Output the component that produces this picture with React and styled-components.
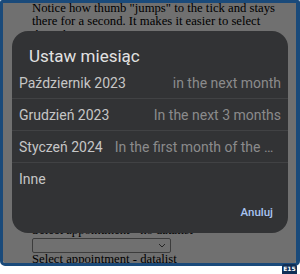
import React from "react";
import styled, { createGlobalStyle } from "styled-components";

const GlobalStyle = createGlobalStyle`
  html, body {
    margin: 0;
    padding: 0;
    background: #ffffff;
  }
`;

const options = [
  { id: 1, label: "Październik 2023", hint: "in the next month" },
  { id: 2, label: "Grudzień 2023", hint: "In the next 3 months" },
  { id: 3, label: "Styczeń 2024", hint: "In the first month of the next year" },
  { id: 4, label: "Inne", hint: "" },
];

function App() {
  return (
    <>
      <GlobalStyle />
      <Screen>
        <Frame>
          <Page>
            <Paragraph>
              Notice how thumb "jumps" to the tick and stays there for a second. It makes it
              easier to select the value you want.
            </Paragraph>
            <Spacer />
            <Label>Select appointment - no datalist</Label>
            <SelectBox>
              <svg width="8" height="5" viewBox="0 0 8 5">
                <path d="M1 1l3 3 3-3" fill="none" stroke="#555" strokeWidth="1" />
              </svg>
            </SelectBox>
            <Label>Select appointment - datalist</Label>
          </Page>

          <Scrim>
            <Dialog>
              <Title>Ustaw miesiąc</Title>
              <List>
                {options.map((opt) => (
                  <Row key={opt.id}>
                    <Primary>{opt.label}</Primary>
                    <Secondary>{opt.hint}</Secondary>
                  </Row>
                ))}
              </List>
              <Footer>
                <TextButton>Anuluj</TextButton>
              </Footer>
            </Dialog>
          </Scrim>
        </Frame>
        <Badge>E15</Badge>
      </Screen>
    </>
  );
}

const Screen = styled.div`
  position: relative;
  width: 300px;
  height: 274px;
  background: #ffffff;
`;

const Frame = styled.div`
  position: relative;
  box-sizing: border-box;
  width: 300px;
  height: 266px;
  border: 3px solid #1a4a7a;
  border-right-width: 4px;
  border-radius: 2px 2px 5px 5px;
  overflow: hidden;
`;

const Page = styled.div`
  height: 100%;
  background: #ffffff;
  padding: 0 0 0 29px;
  margin-top: -1px;
  font-family: "Liberation Serif", serif;
  font-size: 12.7px;
  line-height: 13.4px;
  color: #000000;
`;

const Paragraph = styled.p`
  margin: 0;
  width: 245px;
`;

const Spacer = styled.div`
  height: 182px;
`;

const Label = styled.div`
  white-space: nowrap;
`;

const SelectBox = styled.div`
  box-sizing: border-box;
  width: 139px;
  height: 15px;
  border: 1px solid #8a8a8a;
  border-radius: 2px;
  display: flex;
  align-items: center;
  justify-content: flex-end;
  padding-right: 4px;
`;

const Scrim = styled.div`
  position: absolute;
  inset: 0;
  background: rgba(0, 0, 0, 0.56);
  padding: 28px 0 0 9px;
`;

const Dialog = styled.div`
  box-sizing: border-box;
  width: 276px;
  height: 202px;
  background: #323335;
  border-radius: 16px;
  padding-top: 15px;
  display: flex;
  flex-direction: column;
  font-family: Roboto, "Noto Sans", sans-serif;
`;

const Title = styled.div`
  padding-left: 17px;
  font-size: 17px;
  line-height: 20px;
  color: #e2e2e2;
  margin-bottom: 1px;
`;

const List = styled.div`
  display: flex;
  flex-direction: column;
`;

const Row = styled.div`
  display: flex;
  align-items: center;
  gap: 12px;
  height: 31px;
  padding: 0 7px;
  border-bottom: 1px solid #414244;

  &:last-child {
    border-bottom: none;
  }
`;

const Primary = styled.span`
  flex-shrink: 0;
  font-size: 14px;
  color: #c6c6c6;
  white-space: nowrap;
`;

const Secondary = styled.span`
  flex: 1;
  min-width: 0;
  text-align: right;
  font-size: 14px;
  color: #8b8b8c;
  white-space: nowrap;
  overflow: hidden;
  text-overflow: ellipsis;
`;

const Footer = styled.div`
  display: flex;
  justify-content: flex-end;
  padding: 11px 15px 0 0;
`;

const TextButton = styled.span`
  font-size: 11.5px;
  font-weight: 500;
  color: #a8c4f2;
  line-height: 14px;
`;

const Badge = styled.div`
  position: absolute;
  right: 3px;
  bottom: 0;
  width: 15px;
  height: 10px;
  background: #0f2f57;
  border-radius: 3px 3px 0 0;
  color: #ffffff;
  font-family: "DejaVu Sans", sans-serif;
  font-size: 6px;
  font-weight: bold;
  line-height: 10px;
  text-align: center;
`;

export default App;
